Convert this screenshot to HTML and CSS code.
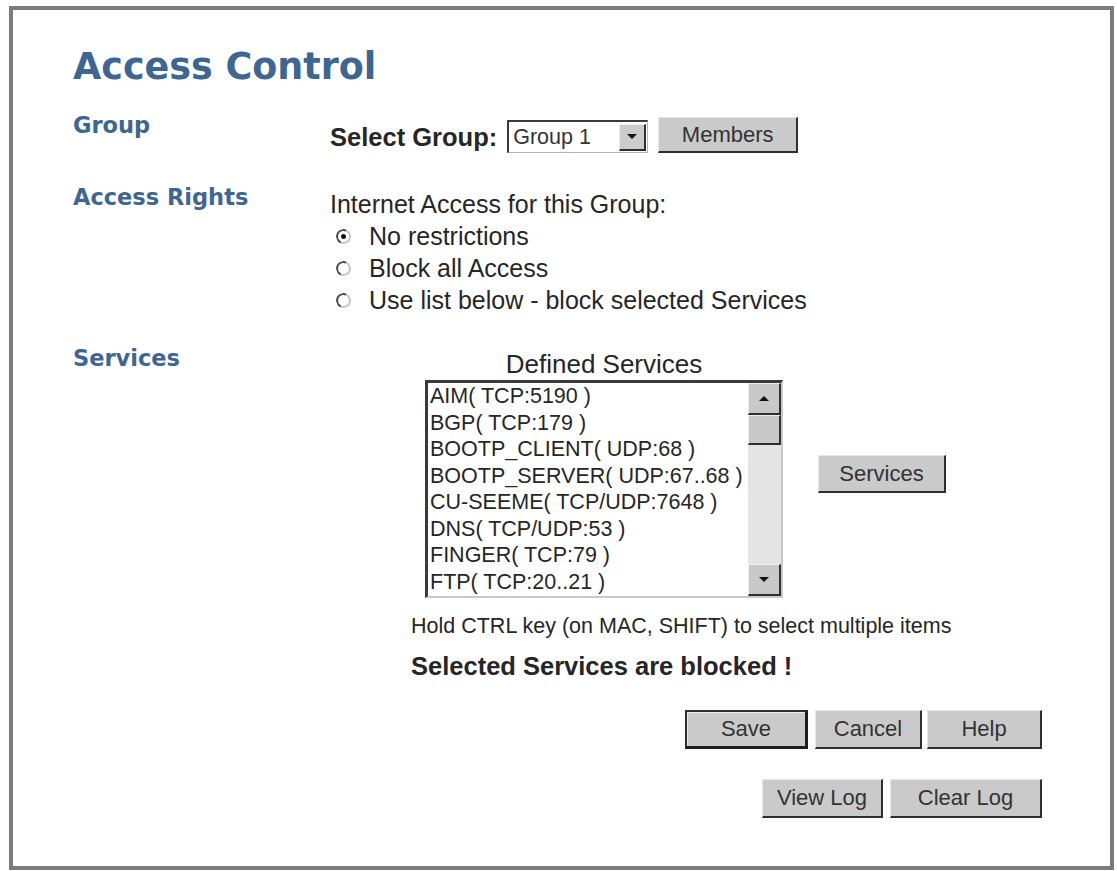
FILE: index.html
```html
<!DOCTYPE html>
<html lang="en">
<head>
    <meta charset="UTF-8">
    <title>Access Control</title>
    <link rel="stylesheet" href="styles.css">
</head>
<body>
    <div class="frame">
        <h1 class="page-title">Access Control</h1>

        <div class="row row-group">
            <div class="section-label">Group</div>
            <div class="section-body group-body">
                <span class="select-label">Select Group:</span>
                <div class="select">
                    <span class="select-value">Group 1</span>
                    <span class="select-arrow"><span class="tri-down"></span></span>
                </div>
                <button class="btn btn-members">Members</button>
            </div>
        </div>

        <div class="row row-rights">
            <div class="section-label">Access Rights</div>
            <div class="section-body rights-body">
                <div class="line">Internet Access for this Group:</div>
                <label class="radio-line"><input type="radio" name="access" checked> No restrictions</label>
                <label class="radio-line"><input type="radio" name="access"> Block all Access</label>
                <label class="radio-line"><input type="radio" name="access"> Use list below - block selected Services</label>
            </div>
        </div>

        <div class="row row-services">
            <div class="section-label">Services</div>
            <div class="section-body services-body">
                <div class="services-box">
                    <div class="list-block">
                        <div class="list-title">Defined Services</div>
                        <div class="listbox">
                            <ul class="list-items">
                                <li>AIM( TCP:5190 )</li>
                                <li>BGP( TCP:179 )</li>
                                <li>BOOTP_CLIENT( UDP:68 )</li>
                                <li>BOOTP_SERVER( UDP:67..68 )</li>
                                <li>CU-SEEME( TCP/UDP:7648 )</li>
                                <li>DNS( TCP/UDP:53 )</li>
                                <li>FINGER( TCP:79 )</li>
                                <li>FTP( TCP:20..21 )</li>
                            </ul>
                            <div class="scrollbar">
                                <span class="sb-btn"><span class="tri-up"></span></span>
                                <span class="sb-thumb"></span>
                                <span class="sb-track"></span>
                                <span class="sb-btn"><span class="tri-down"></span></span>
                            </div>
                        </div>
                    </div>
                    <button class="btn btn-services">Services</button>
                </div>
                <div class="hint">Hold CTRL key (on MAC, SHIFT) to select multiple items</div>
                <div class="blocked">Selected Services are blocked !</div>
            </div>
        </div>

        <div class="button-row actions">
            <button class="btn btn-default btn-save">Save</button>
            <button class="btn btn-cancel">Cancel</button>
            <button class="btn btn-help">Help</button>
        </div>
        <div class="button-row logs">
            <button class="btn btn-view">View Log</button>
            <button class="btn btn-clear">Clear Log</button>
        </div>
    </div>
</body>
</html>
```

FILE: styles.css
```css
body {
    margin: 0;
    padding: 0;
    background-color: #ffffff;
    font-family: "Liberation Sans", Arial, sans-serif;
    color: #262626;
}
.frame {
    margin: 6px 3px 0 9px;
    height: 864px;
    box-sizing: border-box;
    border: 4px solid #7c7c7c;
    padding: 0 68px 0 60px;
}
.page-title {
    margin: 37px 0 0 0;
    font-family: "DejaVu Sans", Verdana, sans-serif;
    font-weight: bold;
    font-size: 36.5px;
    line-height: 40px;
    color: #3d6693;
}

/* label column + content column */
.row {
    display: grid;
    grid-template-columns: 257px 1fr;
    align-items: start;
}
.section-label {
    font-family: "DejaVu Sans", Verdana, sans-serif;
    font-weight: bold;
    font-size: 22.5px;
    line-height: 26px;
    color: #3d6693;
}
.row-group {
    margin-top: 25px;
}
.group-body {
    padding-top: 5px;
    display: flex;
    align-items: center;
    height: 36px;
}
.select-label {
    font-weight: bold;
    font-size: 25.5px;
    padding-top: 5px;
    margin-right: 10px;
}
.select {
    width: 141px;
    height: 33px;
    box-sizing: border-box;
    margin-top: 3px;
    display: flex;
    align-items: center;
    background: #ffffff;
    border-style: solid;
    border-width: 2px 1px 1px 2px;
    border-color: #3a3a3a #b5b5b5 #b5b5b5 #3a3a3a;
}
.select-value {
    flex: 1;
    padding-left: 4px;
    font-size: 21.5px;
    color: #333;
}
.select-arrow {
    width: 27px;
    height: 27px;
    margin-right: 1px;
    box-sizing: border-box;
    display: flex;
    align-items: center;
    justify-content: center;
    background: #cbcbcb;
    border-style: solid;
    border-width: 1px 2px 2px 1px;
    border-color: #eeeeee #2e2e2e #2e2e2e #eeeeee;
}
.tri-down,
.tri-up {
    width: 0;
    height: 0;
    border-left: 5px solid transparent;
    border-right: 5px solid transparent;
}
.tri-down {
    border-top: 5px solid #111;
}
.tri-up {
    border-bottom: 5px solid #111;
}

.btn {
    font-family: "Liberation Sans", Arial, sans-serif;
    font-size: 22px;
    color: #333;
    background-color: #cacaca;
    border-style: solid;
    border-width: 1px 2px 2px 1px;
    border-color: #e6e6e6 #2f2f2f #2f2f2f #e6e6e6;
    height: 39px;
    padding: 0;
    cursor: pointer;
}
.btn-members {
    width: 140px;
    height: 36px;
    margin-left: 10px;
}

.row-rights {
    margin-top: 31px;
}
.rights-body {
    padding-top: 4px;
    font-size: 25px;
    line-height: 32px;
}
.radio-line {
    display: flex;
    align-items: center;
    padding-left: 6px;
}
.radio-line input {
    appearance: none;
    -webkit-appearance: none;
    box-sizing: border-box;
    width: 15px;
    height: 15px;
    margin: 0 18px 0 0;
    border: 2px solid;
    border-color: #4a4a4a #c4c4c4 #c4c4c4 #4a4a4a;
    border-radius: 50%;
    transform: rotate(-20deg);
    position: relative;
    background: #fff;
}
.radio-line input:checked::after {
    content: "";
    position: absolute;
    left: 3px;
    top: 3px;
    width: 5px;
    height: 5px;
    border-radius: 50%;
    background: #111;
}

.row-services {
    margin-top: 29px;
}
.services-body {
    padding-top: 4px;
}
.services-box {
    display: flex;
    align-items: flex-start;
    margin-left: 95px;
}
.list-title {
    font-size: 26px;
    line-height: 30px;
    text-align: center;
    margin-bottom: 1px;
}
.listbox {
    width: 358px;
    height: 218px;
    box-sizing: border-box;
    display: flex;
    border-style: solid;
    border-width: 3px 2px 2px 3px;
    border-color: #3a3a3a #c9c9c9 #c9c9c9 #3a3a3a;
    background: #fff;
}
.list-items {
    flex: 1;
    list-style: none;
    margin: 0;
    padding: 0 0 0 2px;
    overflow: hidden;
    font-size: 21.5px;
    line-height: 26.5px;
    white-space: nowrap;
}
.scrollbar {
    width: 33px;
    display: flex;
    flex-direction: column;
    background: #e4e4e4;
}
.sb-btn,
.sb-thumb {
    box-sizing: border-box;
    background: #c8c8c8;
    border-style: solid;
    border-width: 1px 2px 2px 1px;
    border-color: #f0f0f0 #2f2f2f #2f2f2f #f0f0f0;
}
.sb-btn {
    height: 32px;
    display: flex;
    align-items: center;
    justify-content: center;
}
.sb-thumb {
    height: 30px;
}
.sb-track {
    flex: 1;
}
.btn-services {
    width: 128px;
    height: 38px;
    margin: 106px 0 0 35px;
}
.hint {
    margin: 15px 0 0 81px;
    font-size: 21.5px;
    line-height: 26px;
}
.blocked {
    margin: 12px 0 0 81px;
    font-weight: bold;
    font-size: 25.5px;
    line-height: 30px;
}

.button-row {
    display: flex;
    justify-content: flex-end;
}
.actions {
    margin-top: 29px;
}
.logs {
    margin-top: 30px;
}
.btn-save {
    width: 123px;
}
.btn-default {
    border-width: 2px 3px 3px 2px;
    border-color: #2f2f2f #1e1e1e #1e1e1e #2f2f2f;
    box-shadow: inset 1px 1px 0 #ececec;
}
.btn-cancel {
    width: 107px;
    margin-left: 7px;
}
.btn-help {
    width: 115px;
    margin-left: 5px;
}
.btn-view {
    width: 121px;
}
.btn-clear {
    width: 152px;
    margin-left: 7px;
}
```
